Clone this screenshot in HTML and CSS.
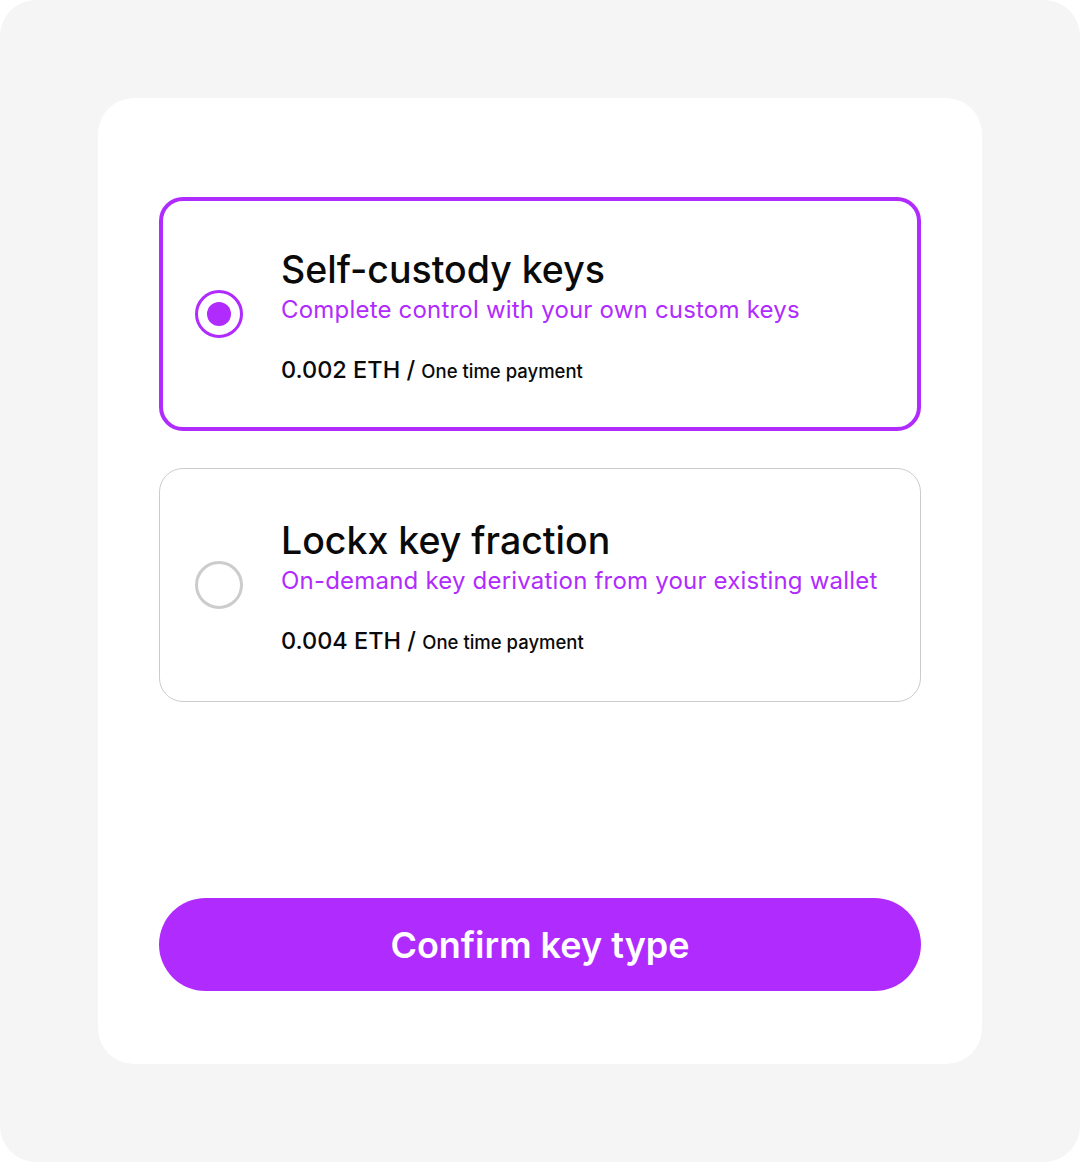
FILE: index.html
```html
<!DOCTYPE html>
<html>
<head>
<meta charset="utf-8">
<link rel="stylesheet" href="styles.css">
</head>
<body>
<div class="page">
  <div class="card">
    <div class="options">
      <div class="option selected">
        <span class="radio"><span class="dot"></span></span>
        <div class="text">
          <div class="title">Self-custody keys</div>
          <div class="sub">Complete control with your own custom keys</div>
          <div class="price">0.002 ETH / <span class="note">One time payment</span></div>
        </div>
      </div>
      <div class="option">
        <span class="radio"></span>
        <div class="text">
          <div class="title">Lockx key fraction</div>
          <div class="sub">On-demand key derivation from your existing wallet</div>
          <div class="price">0.004 ETH / <span class="note">One time payment</span></div>
        </div>
      </div>
    </div>
    <button class="confirm">Confirm key type</button>
  </div>
</div>
</body>
</html>
```
FILE: styles.css
```css
html, body { margin: 0; padding: 0; background: #ffffff; }
.page {
  width: 1080px;
  height: 1162px;
  box-sizing: border-box;
  background: #f5f5f5;
  border-radius: 36px;
  padding: 98px;
  font-family: Inter, "Noto Sans", sans-serif;
}
.card {
  height: 966px;
  box-sizing: border-box;
  background: #ffffff;
  border-radius: 36px;
  padding: 99px 61px 73px;
  display: flex;
  flex-direction: column;
}
.options { display: flex; flex-direction: column; gap: 37px; }
.option {
  height: 234px;
  box-sizing: border-box;
  border: 1px solid #cccccc;
  border-radius: 24px;
  display: flex;
  align-items: center;
  padding-left: 35px;
}
.option.selected { border: 4px solid #b02bfe; padding-left: 32px; }
.radio {
  width: 48px; height: 48px;
  box-sizing: border-box;
  border: 3px solid #cccccc;
  border-radius: 50%;
  display: flex; align-items: center; justify-content: center;
  flex: none;
  margin-right: 38px;
}
.selected .radio { border-color: #b02bfe; }
.dot { width: 24px; height: 24px; border-radius: 50%; background: #b02bfe; }
.text { display: flex; flex-direction: column; margin-top: 4px; }
.title { font-size: 37.5px; line-height: 44px; font-weight: 500; color: #0a0a0a; }
.sub { font-size: 24px; line-height: 36px; color: #b02bfe; letter-spacing: 0.2px; }
.price { font-size: 23.5px; line-height: 28px; margin-top: 28px; font-weight: 500; color: #0a0a0a; }
.note { font-size: 18.5px; }
.confirm {
  margin-top: auto;
  height: 93px;
  border: none;
  border-radius: 47px;
  background: #b02bfe;
  color: #ffffff;
  font-family: Inter, "Noto Sans", sans-serif;
  font-size: 36px;
  font-weight: 600;
  padding: 0;
}
```
